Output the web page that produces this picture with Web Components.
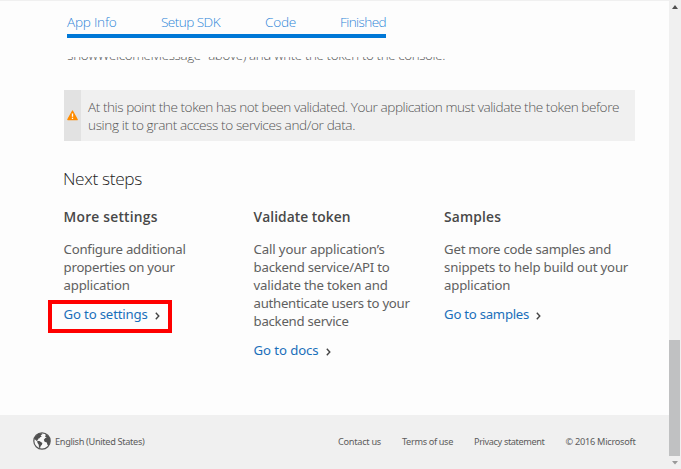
<!DOCTYPE html>
<html lang="en">
<head>
<meta charset="utf-8">
<title>Next steps</title>
<style>
html,body{margin:0;width:681px;height:469px;overflow:hidden;background:#fdfdfd}
body{font-family:"Noto Sans","Open Sans",sans-serif;color:#666}
</style>
</head>
<body>
<guide-page></guide-page>
<script>
const define=(name,html,setup)=>customElements.define(name,class extends HTMLElement{
  constructor(){super();this.attachShadow({mode:'open'}).innerHTML=html;}
  connectedCallback(){if(setup)setup(this,this.shadowRoot);}
});

/* One line of text, tracked so that it fills the measure given in "w". */
define('text-line',`<style>:host{display:block;white-space:nowrap}span{display:inline-block}</style><span><slot></slot></span>`,(el,root)=>{
  const s=root.querySelector('span'),n=el.textContent.length,w=+el.getAttribute('w');
  if(w)s.style.letterSpacing=((w-s.getBoundingClientRect().width)/n).toFixed(4)+'px';
});

define('step-tabs',`<style>
:host{display:grid;grid-template-columns:94px 104px 75px 46px;width:319px;padding-top:12px;box-sizing:border-box;border-bottom:4px solid #0078d7;height:38px;margin-left:67px;
font:300 13.6px/20px "Open Sans","Noto Sans",sans-serif;color:#2f86d8}</style><slot></slot>`);

define('clipped-line',`<style>:host{display:block;height:9px;margin:19px 0 0 63px;overflow:hidden;font:300 13.4px/18px "Open Sans",sans-serif;color:#555}
div{margin-top:-11px}</style><div><slot></slot></div>`);

define('alert-note',`<style>
:host{display:flex;width:571px;height:51px;margin:24px 0 0 64px;background:#f0f0f0;color:#555;font:300 13.6px/18px "Open Sans",sans-serif}
.mark{width:17px;background:#e2e2e2;display:flex;align-items:center;justify-content:center}
.copy{padding:8px 0 0 7px}svg{display:block}</style>
<div class="mark"><svg width="11" height="11" viewBox="0 0 11 11"><path d="M5.5 1 10.2 9.6H.8Z" fill="#ff8c00" stroke="#ff8c00" stroke-width="1.2" stroke-linejoin="round"/><path d="M5.5 3.6V6.7M5.5 7.7V8.9" stroke="#fff" stroke-width="1.3"/></svg></div>
<div class="copy"><slot></slot></div>`);

define('section-title',`<style>:host{display:block;margin:26px 0 0 63px;font:300 17.3px/24px "Open Sans",sans-serif;color:#222}</style><slot></slot>`);

define('step-columns',`<style>:host{display:grid;grid-template-columns:190px 190.5px 190px;margin:15px 0 0 63.6px;height:209px}</style><slot></slot>`);

define('step-card',`<style>:host{display:block;font-size:13.2px;line-height:18px;color:#606060}
.head{font-family:"Open Sans",sans-serif;font-weight:600;font-size:13.8px;color:#484848;height:32px;margin-top:2px}
.link{margin-top:11px}</style>
<div class="head"><slot name="title"></slot></div><slot></slot><div class="link"><slot name="link"></slot></div>`);

define('go-link',`<style>:host{display:flex;align-items:center;position:relative;width:max-content;color:#1a6fba;font-size:13.2px;line-height:18px}
svg{margin:3px 0 0 7px;display:block}
:host([marked])::after{content:"";position:absolute;left:-15.6px;top:-5px;width:116px;height:25px;border:4px solid #f00}</style>
<slot></slot><svg width="5" height="8" viewBox="0 0 5 8"><path d="M.8.8 3.8 4 .8 7.2" fill="none" stroke="#444" stroke-width="1.4"/></svg>`);

define('page-footer',`<style>:host{display:flex;height:54px;background:#f0f0f0;font-size:9.2px;line-height:14px;color:#5c5c5c;box-sizing:border-box;padding:0 33.5px 0 33px;align-items:flex-start}
svg{display:block;margin:17px 4px 0 0}.lang{margin-top:20px}.links{display:flex;gap:21px;margin:20px 0 0 auto}</style>
<svg width="18" height="18" viewBox="0 0 18 18"><circle cx="9" cy="9" r="8.2" fill="#f8f8f8" stroke="#555" stroke-width="1.2"/><path fill="#505050" d="M2 5 5 2 8.5 1.2 9.4 2.2 7.6 3.2 8.7 4.4 7.2 5.2 6.2 6.6 5 6.8 5.2 8 3.7 7.8 4.8 9.1 6.4 9.1 9.4 11 8.9 12.7 7.7 13.9 7 16.2 6 15.4 5.7 12.7 4.4 10.8 4.4 9.6 2 7.6ZM12 2.3 15.2 3.8 17 7.2 17 10.5 15.8 13.4 14.5 13.1 13.8 10.5 11.6 9.8 10.8 7.7 12.3 5.9 13.8 5.6 12 4.7 12.7 3.7Z"/></svg>
<div class="lang"><slot name="language"></slot></div><div class="links"><slot></slot></div>`);

define('scroll-rail',`<style>:host{display:flex;flex-direction:column;width:12px;height:469px;background:#f0f0f0}
.thumb{width:11px;height:116px;background:#c0c1c2;margin-top:auto}
svg{display:block}.up{margin:5px 0 0 3px}.down{margin:5px 0 4px 3px}</style>
<svg class="up" width="6" height="4" viewBox="0 0 6 4"><path d="M3 0 6 4H0Z" fill="#505050"/></svg>
<div class="thumb"></div>
<svg class="down" width="6" height="4" viewBox="0 0 6 4"><path d="M0 0H6L3 3.6Z" fill="#999"/></svg>`);

define('guide-page',`<style>:host{display:grid;grid-template-columns:669px 12px;width:681px;height:469px}
main{display:flex;flex-direction:column;height:469px;box-sizing:border-box;box-shadow:inset 0 1px #f0f0f0}
page-footer{margin-top:auto}</style>
<main>
<step-tabs><text-line w="49.5">App Info</text-line><text-line w="59">Setup SDK</text-line><text-line w="31">Code</text-line><text-line w="46">Finished</text-line></step-tabs>
<clipped-line><text-line w="382">"showWelcomeMessage" above) and write the token to the console.</text-line></clipped-line>
<alert-note><text-line w="531">At this point the token has not been validated. Your application must validate the token before</text-line><text-line w="267">using it to grant access to services and/or data.</text-line></alert-note>
<section-title><text-line w="79">Next steps</text-line></section-title>
<step-columns>
<step-card><text-line slot="title" w="94">More settings</text-line><text-line w="122">Configure additional</text-line><text-line w="111">properties on your</text-line><text-line w="66">application</text-line><go-link slot="link" marked><text-line w="84">Go to settings</text-line></go-link></step-card>
<step-card><text-line slot="title" w="97">Validate token</text-line><text-line w="131">Call your application’s</text-line><text-line w="136">backend service/API to</text-line><text-line w="134">validate the token and</text-line><text-line w="156">authenticate users to your</text-line><text-line w="95">backend service</text-line><go-link slot="link"><text-line w="65">Go to docs</text-line></go-link></step-card>
<step-card><text-line slot="title" w="57">Samples</text-line><text-line w="167">Get more code samples and</text-line><text-line w="184">snippets to help build out your</text-line><text-line w="66">application</text-line><go-link slot="link"><text-line w="85">Go to samples</text-line></go-link></step-card>
</step-columns>
<page-footer><text-line slot="language" w="89.5">English (United States)</text-line><text-line w="43">Contact us</text-line><text-line w="51">Terms of use</text-line><text-line w="70.5">Privacy statement</text-line><text-line w="70">© 2016 Microsoft</text-line></page-footer>
</main>
<scroll-rail></scroll-rail>`);
</script>
</body>
</html>
